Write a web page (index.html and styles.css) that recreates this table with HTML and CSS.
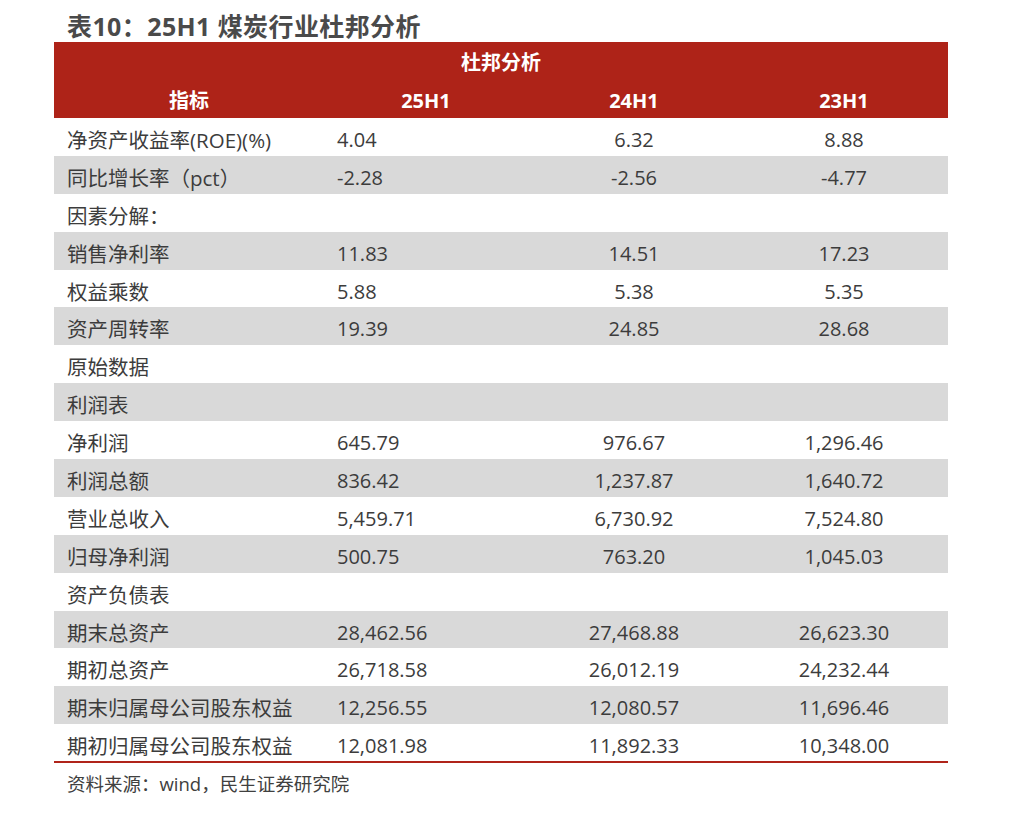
FILE: index.html
```html
<!DOCTYPE html>
<html lang="zh-CN">
<head>
<meta charset="utf-8">
<title>表10：25H1 煤炭行业杜邦分析</title>
<link rel="stylesheet" href="styles.css">
</head>
<body>
<div class="page">
  <h1 class="title">表10：25H1 煤炭行业杜邦分析</h1>
  <table class="dupont">
    <colgroup>
      <col class="c-name"><col class="c-v1"><col class="c-v2"><col class="c-v3">
    </colgroup>
    <thead>
      <tr class="h1"><th colspan="4">杜邦分析</th></tr>
      <tr class="h2"><th>指标</th><th>25H1</th><th>24H1</th><th>23H1</th></tr>
    </thead>
    <tbody>
      <tr><td>净资产收益率(ROE)(%)</td><td class="l">4.04</td><td>6.32</td><td>8.88</td></tr>
      <tr><td>同比增长率（pct）</td><td class="l">-2.28</td><td>-2.56</td><td>-4.77</td></tr>
      <tr><td>因素分解：</td><td class="l"></td><td></td><td></td></tr>
      <tr><td>销售净利率</td><td class="l">11.83</td><td>14.51</td><td>17.23</td></tr>
      <tr><td>权益乘数</td><td class="l">5.88</td><td>5.38</td><td>5.35</td></tr>
      <tr><td>资产周转率</td><td class="l">19.39</td><td>24.85</td><td>28.68</td></tr>
      <tr><td>原始数据</td><td class="l"></td><td></td><td></td></tr>
      <tr><td>利润表</td><td class="l"></td><td></td><td></td></tr>
      <tr><td>净利润</td><td class="l">645.79</td><td>976.67</td><td>1,296.46</td></tr>
      <tr><td>利润总额</td><td class="l">836.42</td><td>1,237.87</td><td>1,640.72</td></tr>
      <tr><td>营业总收入</td><td class="l">5,459.71</td><td>6,730.92</td><td>7,524.80</td></tr>
      <tr><td>归母净利润</td><td class="l">500.75</td><td>763.20</td><td>1,045.03</td></tr>
      <tr><td>资产负债表</td><td class="l"></td><td></td><td></td></tr>
      <tr><td>期末总资产</td><td class="l">28,462.56</td><td>27,468.88</td><td>26,623.30</td></tr>
      <tr><td>期初总资产</td><td class="l">26,718.58</td><td>26,012.19</td><td>24,232.44</td></tr>
      <tr><td>期末归属母公司股东权益</td><td class="l">12,256.55</td><td>12,080.57</td><td>11,696.46</td></tr>
      <tr><td>期初归属母公司股东权益</td><td class="l">12,081.98</td><td>11,892.33</td><td>10,348.00</td></tr>
    </tbody>
  </table>
  <p class="source">资料来源：wind，民生证券研究院</p>
</div>
</body>
</html>
```

FILE: styles.css
```css
html, body {
  margin: 0;
  padding: 0;
  background: #ffffff;
}
.page {
  width: 894px;
  padding: 11px 0 0 54px;
  font-family: "Open Sans", "Noto Sans CJK SC", sans-serif;
  color: #3a3a3a;
}
.title {
  margin: 0;
  padding-left: 13px;
  height: 31px;
  line-height: 31px;
  font-size: 25px;
  font-weight: 700;
  color: #4a4a4a;
  letter-spacing: 0.4px;
}
.dupont {
  width: 894px;
  border-collapse: collapse;
  table-layout: fixed;
  border-bottom: 2px solid #b0241a;
}
.c-name { width: 270px; }
.c-v1 { width: 204px; }
.c-v2 { width: 212px; }
.c-v3 { width: 208px; }
.dupont thead tr {
  background: #ae2318;
  color: #ffffff;
  height: 38px;
}
.dupont th {
  font-size: 20px;
  font-weight: 700;
  line-height: 26px;
  text-align: center;
  padding: 4px 0 0;
  vertical-align: middle;
}
.dupont tbody tr {
  height: 37.9px;
}
.dupont tbody tr:nth-child(even) {
  background: #d9d9d9;
}
.dupont td {
  font-size: 20px;
  line-height: 26px;
  padding: 6px 0 0;
  text-align: center;
  vertical-align: middle;
  white-space: nowrap;
  color: #3c3c3c;
}
.dupont td:first-child {
  text-align: left;
  padding-left: 13px;
  font-size: 20.5px;
}
.dupont td.l {
  text-align: left;
  padding-left: 13px;
}
.source {
  margin: 8px 0 0;
  padding-left: 13px;
  font-size: 18.5px;
  line-height: 26px;
  color: #404040;
}
```
